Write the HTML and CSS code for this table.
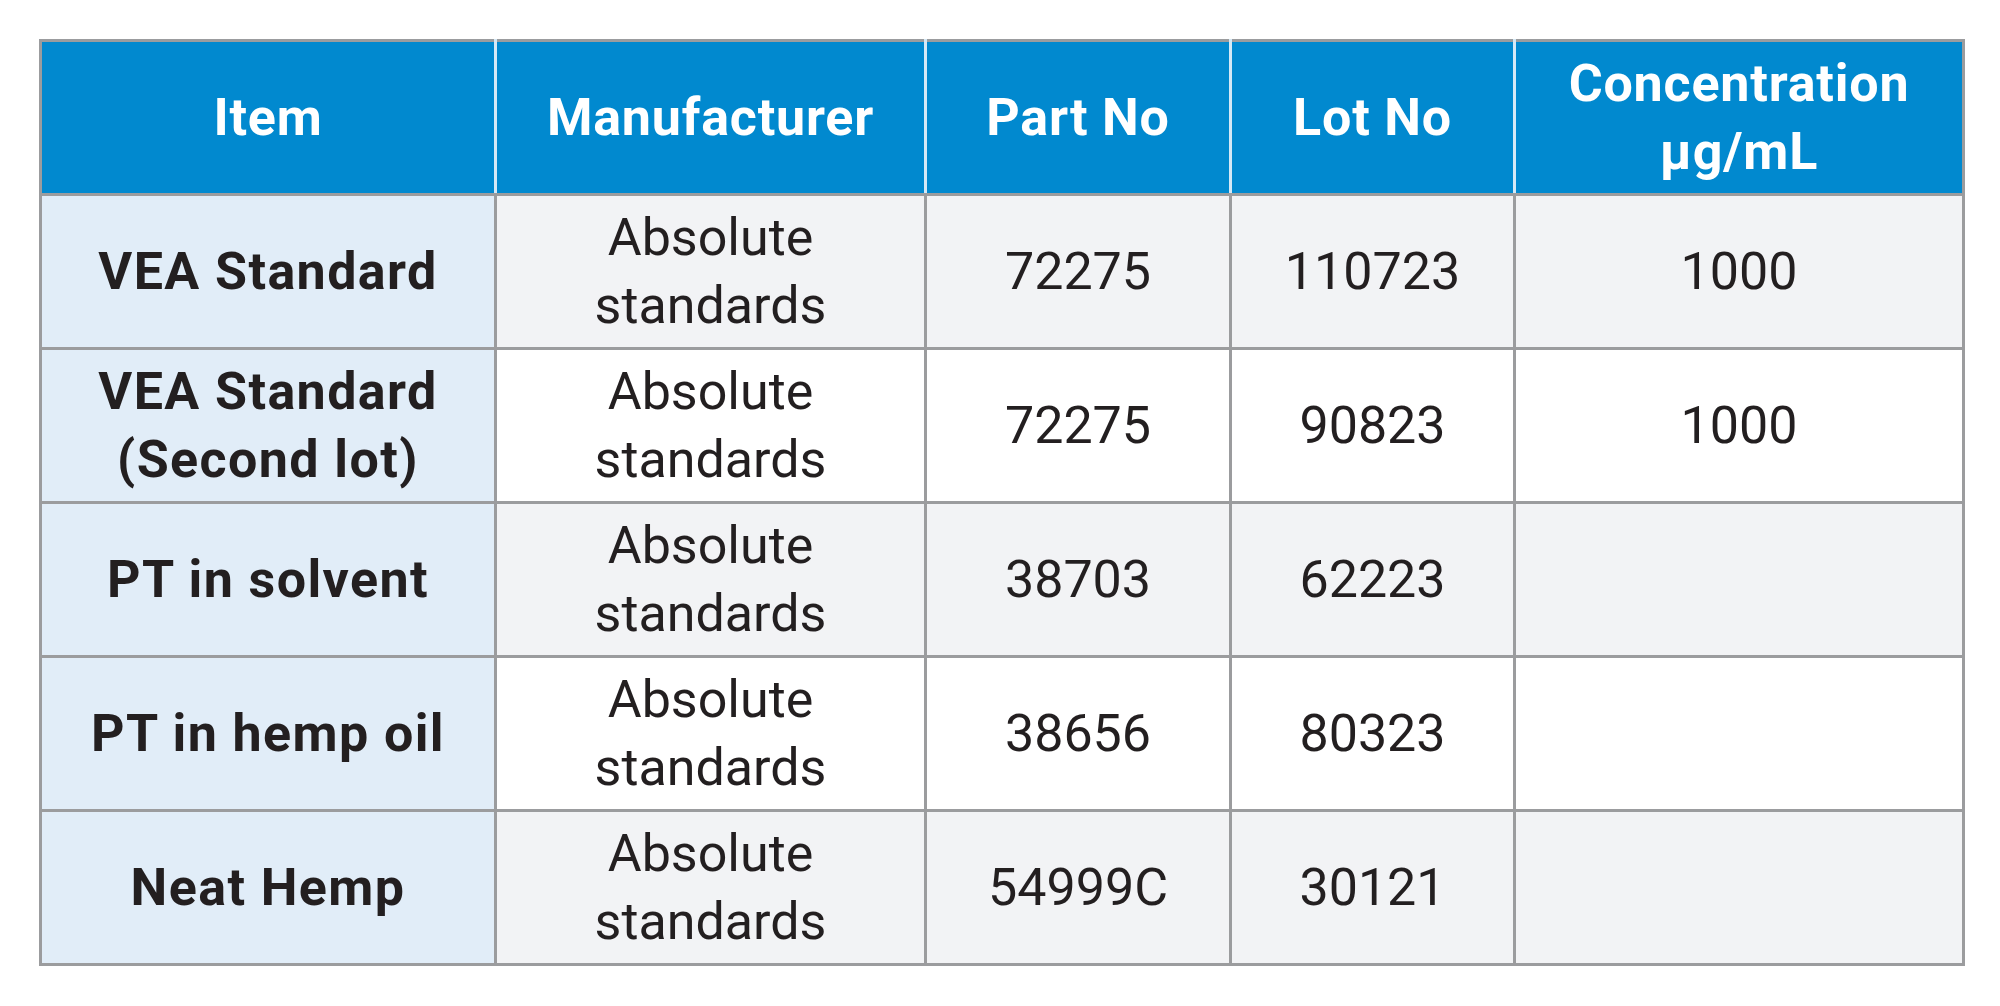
FILE: index.html
```html
<!DOCTYPE html>
<html>
<head>
<meta charset="utf-8">
<link rel="stylesheet" href="styles.css">
</head>
<body>
<table class="grid">
  <colgroup>
    <col class="c1"><col class="c2"><col class="c3"><col class="c4"><col class="c5">
  </colgroup>
  <thead>
    <tr>
      <th>Item</th>
      <th>Manufacturer</th>
      <th>Part No</th>
      <th>Lot No</th>
      <th>Concentration<br>µg/mL</th>
    </tr>
  </thead>
  <tbody>
    <tr class="alt">
      <td class="item">VEA Standard</td>
      <td>Absolute<br>standards</td>
      <td>72275</td>
      <td>110723</td>
      <td>1000</td>
    </tr>
    <tr>
      <td class="item">VEA Standard<br>(Second lot)</td>
      <td>Absolute<br>standards</td>
      <td>72275</td>
      <td>90823</td>
      <td>1000</td>
    </tr>
    <tr class="alt">
      <td class="item">PT in solvent</td>
      <td>Absolute<br>standards</td>
      <td>38703</td>
      <td>62223</td>
      <td></td>
    </tr>
    <tr>
      <td class="item">PT in hemp oil</td>
      <td>Absolute<br>standards</td>
      <td>38656</td>
      <td>80323</td>
      <td></td>
    </tr>
    <tr class="alt">
      <td class="item">Neat Hemp</td>
      <td>Absolute<br>standards</td>
      <td>54999C</td>
      <td>30121</td>
      <td></td>
    </tr>
  </tbody>
</table>
</body>
</html>
```

FILE: styles.css
```css
html, body {
  margin: 0;
  padding: 0;
  background: #ffffff;
}

body {
  padding: 39px 0 0 39px;
  font-family: Roboto, "Liberation Sans", sans-serif;
  color: #231f20;
}

.grid {
  border-collapse: collapse;
  table-layout: fixed;
  width: 1923px;
  font-size: 52px;
  line-height: 68px;
}

.c1 { width: 455px; }
.c2 { width: 430px; }
.c3 { width: 305px; }
.c4 { width: 284px; }
.c5 { width: 449px; }

.grid th,
.grid td {
  border: 3px solid #9b9c9e;
  text-align: center;
  vertical-align: middle;
  padding: 0;
  height: 151px;
}

.grid th {
  background: #0189cf;
  color: #ffffff;
  font-weight: 700;
  letter-spacing: 0.8px;
  border-left-color: #d5e9f6;
  border-right-color: #d5e9f6;
}

.grid th:first-child { border-left-color: #9b9c9e; }
.grid th:last-child { border-right-color: #9b9c9e; }

.grid td {
  background: #ffffff;
  font-weight: 400;
}

.grid tr.alt td {
  background: #f2f3f5;
}

.grid td.item,
.grid tr.alt td.item {
  background: #e1edf8;
  font-weight: 700;
  letter-spacing: 1.4px;
}
```
